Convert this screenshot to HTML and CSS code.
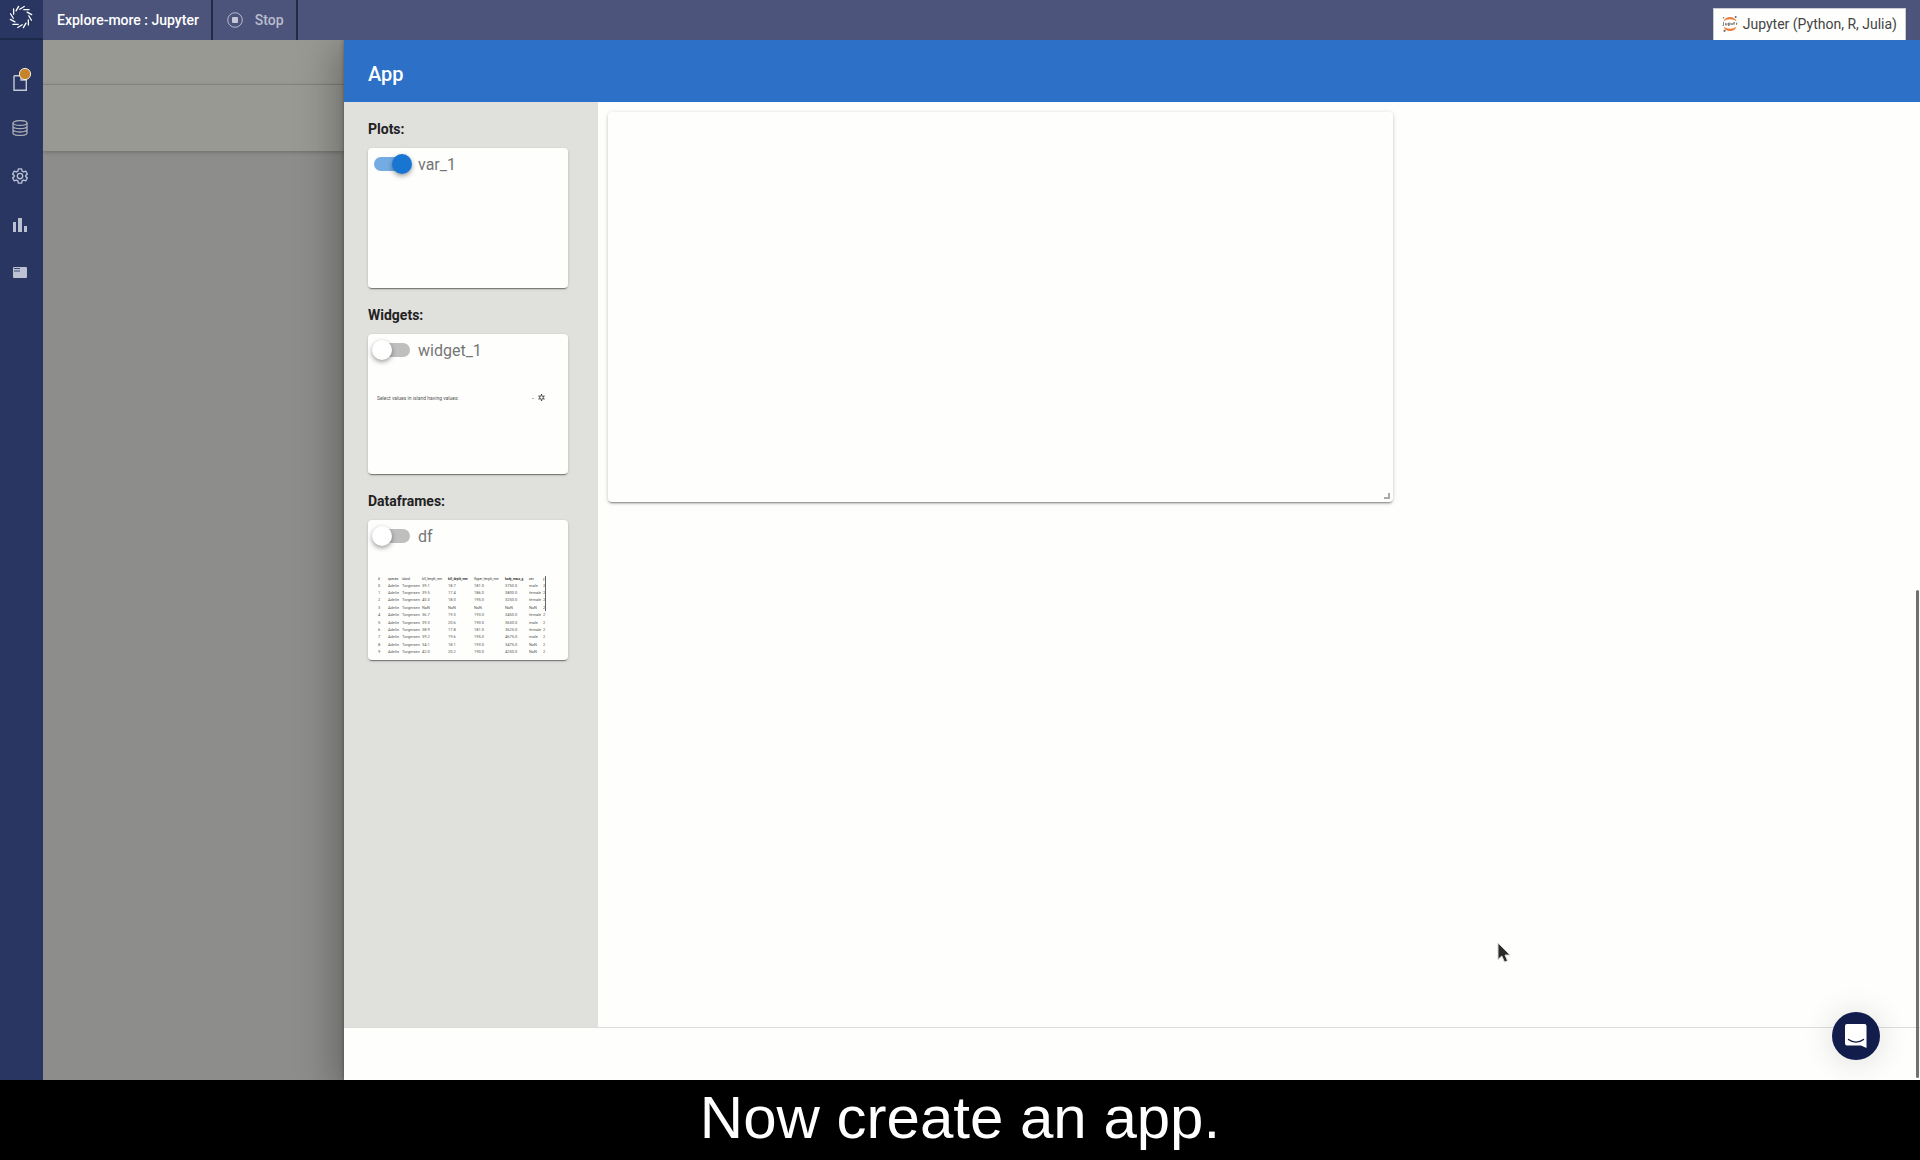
FILE: index.html
```html
<!DOCTYPE html>
<html lang="en">
<head>
<meta charset="utf-8">
<title>Explore-more : Jupyter</title>
<link rel="stylesheet" href="styles.css">
</head>
<body>
<div class="app">
  <nav class="rail" aria-label="Main">
    <a class="rail-logo" href="#" aria-label="Home">
      <svg width="24" height="24" viewBox="-12 -12 24 24" fill="none" stroke="#fff" stroke-width="1.3" stroke-linecap="round">
        <defs><path id="ray" d="M-2.300 -7.500L1.800 -10.800"/></defs>
        <g transform="rotate(8)"><use href="#ray"/><use href="#ray" transform="rotate(30)"/><use href="#ray" transform="rotate(60)"/><use href="#ray" transform="rotate(90)"/><use href="#ray" transform="rotate(120)"/><use href="#ray" transform="rotate(150)"/><use href="#ray" transform="rotate(180)"/><use href="#ray" transform="rotate(210)"/><use href="#ray" transform="rotate(240)"/><use href="#ray" transform="rotate(270)"/><use href="#ray" transform="rotate(300)"/><use href="#ray" transform="rotate(330)"/></g>
      </svg>
    </a>
    <div class="rail-items">
      <a href="#" aria-label="Files"><svg width="24" height="26" viewBox="0 0 24 26"><path d="M6 8.7H13M18.3 12V23.3H6V8.7M13 9V13H18" fill="none" stroke="#c3c8d4" stroke-width="1.4"/><circle cx="17" cy="7" r="5.6" fill="#c5832b" stroke="#f4ead8" stroke-width="1"/></svg></a>
      <a href="#" aria-label="Data"><svg width="16" height="16" viewBox="0 0 16 16" fill="none" stroke="#a9acb4" stroke-width="1.3"><ellipse cx="8" cy="3" rx="7" ry="2.4"/><path d="M1 3V13C1 16.2 15 16.2 15 13V3M1 6.3C1 9.5 15 9.5 15 6.3M1 9.6C1 12.8 15 12.8 15 9.6"/></svg></a>
      <a href="#" aria-label="Settings"><svg width="18" height="18" viewBox="0 0 24 24" fill="none" stroke="#b9c0d2" stroke-width="1.8" stroke-linejoin="round"><circle cx="12" cy="12" r="3.6"/><path d="M9.8 2.5h4.4l.6 2.9 2 1.2 2.8-1 2.2 3.9-2.2 1.9v1.2l2.2 1.9-2.2 3.9-2.8-1-2 1.2-.6 2.9H9.8l-.6-2.9-2-1.2-2.8 1-2.2-3.9 2.2-1.9v-1.2L2.200 9.500l2.200-3.900 2.800 1 2-1.200z"/></svg></a>
      <a href="#" aria-label="Charts"><svg width="16" height="16" viewBox="0 0 16 16" fill="#b9c0d2"><path d="M1 6h3v10H1zM6 2h4v14H6zM12 10h3v6h-3z"/></svg></a>
      <a href="#" aria-label="Dashboards"><svg width="16" height="12" viewBox="0 0 16 12"><rect x="1" y="1" width="14" height="11" rx="1" fill="#bcc2d4"/><path d="M2 2.500H8M2 5H8" stroke="#3c4870" stroke-width="1.200"/></svg></a>
    </div>
  </nav>
  <div class="stage">
    <header class="topbar">
      <h1 class="project">Explore-more : Jupyter</h1>
      <button class="stop" type="button"><svg width="16" height="16" viewBox="0 0 16 16"><circle cx="8" cy="8" r="7.300" fill="none" stroke="#b7bacb"/><rect x="5" y="5" width="6" height="6" rx="1" fill="#c6c8d6"/></svg>Stop</button>
      <a class="kernel" href="#"><svg width="16" height="16" viewBox="0 0 16 16"><path d="M1.500 5.500C3 -.500 13 -.500 14.500 5.500C11 2.500 5 2.500 1.500 5.500ZM1.500 10.500C3 16.500 13 16.500 14.500 10.500C11 13.500 5 13.500 1.500 10.500Z" fill="#ea7c38"/><circle cx="13.700" cy="1" r="1" fill="#666"/><circle cx="1.500" cy="1.800" r=".8" fill="#777"/><circle cx="2.500" cy="14.800" r="1.100" fill="#666"/><path d="M1.500 6V9.500H.500M3.500 7V9H5V7M6.500 10V7H8V9H6.500M9 7L10 9L11 7M12 6V9M11.500 7H13M14.500 9V7H15.500" fill="none" stroke="#555" stroke-width=".7"/></svg>Jupyter (Python, R, Julia)</a>
    </header>
    <div class="workspace">
      <div class="backdrop"><div class="backdrop-bar"></div><div class="backdrop-tools"></div></div>
      <section class="drawer" aria-label="App">
        <header class="drawer-head"><h2>App</h2></header>
        <div class="drawer-body">
          <aside class="sources">
            <h3>Plots:</h3>
            <div class="card">
              <label class="switch"><input type="checkbox" checked><span>var_1</span></label>
            </div>
            <h3>Widgets:</h3>
            <div class="card">
              <label class="switch"><input type="checkbox"><span>widget_1</span></label>
              <div class="preview widget-preview"><span>Select values in island having values:</span><span class="dash">-</span><svg width="7" height="7" viewBox="0 0 14 14"><circle cx="7" cy="7" r="3.600" fill="none" stroke="#444" stroke-width="2"/><path d="M7 0V3M7 11V14M1 3.500L3.500 5M10.500 9L13 10.500M1 10.500L3.500 9M10.500 5L13 3.500" stroke="#444" stroke-width="2.400"/></svg></div>
            </div>
            <h3>Dataframes:</h3>
            <div class="card">
              <label class="switch"><input type="checkbox"><span>df</span></label>
              <div class="preview table-preview">
                <table>
                  <colgroup><col class="c-index"><col class="c-species"><col class="c-island"><col class="c-num"><col class="c-num"><col class="c-flipper"><col class="c-mass"><col class="c-sex"><col class="c-year"></colgroup>
                  <thead><tr><th>#</th><th>species</th><th>island</th><th>bill_length_mm</th><th class="strong">bill_depth_mm</th><th>flipper_length_mm</th><th class="strong">body_mass_g</th><th>sex</th><th>y</th></tr></thead>
                  <tbody>
                    <tr><td>0</td><td>Adelie</td><td>Torgersen</td><td>39.1</td><td>18.7</td><td>181.0</td><td>3750.0</td><td>male</td><td>2</td></tr>
                    <tr><td>1</td><td>Adelie</td><td>Torgersen</td><td>39.5</td><td>17.4</td><td>186.0</td><td>3800.0</td><td>female</td><td>2</td></tr>
                    <tr><td>2</td><td>Adelie</td><td>Torgersen</td><td>40.3</td><td>18.0</td><td>195.0</td><td>3250.0</td><td>female</td><td>2</td></tr>
                    <tr><td>3</td><td>Adelie</td><td>Torgersen</td><td>NaN</td><td>NaN</td><td>NaN</td><td>NaN</td><td>NaN</td><td>2</td></tr>
                    <tr><td>4</td><td>Adelie</td><td>Torgersen</td><td>36.7</td><td>19.3</td><td>193.0</td><td>3450.0</td><td>female</td><td>2</td></tr>
                    <tr><td>5</td><td>Adelie</td><td>Torgersen</td><td>39.3</td><td>20.6</td><td>190.0</td><td>3650.0</td><td>male</td><td>2</td></tr>
                    <tr><td>6</td><td>Adelie</td><td>Torgersen</td><td>38.9</td><td>17.8</td><td>181.0</td><td>3625.0</td><td>female</td><td>2</td></tr>
                    <tr><td>7</td><td>Adelie</td><td>Torgersen</td><td>39.2</td><td>19.6</td><td>195.0</td><td>4675.0</td><td>male</td><td>2</td></tr>
                    <tr><td>8</td><td>Adelie</td><td>Torgersen</td><td>34.1</td><td>18.1</td><td>193.0</td><td>3475.0</td><td>NaN</td><td>2</td></tr>
                    <tr><td>9</td><td>Adelie</td><td>Torgersen</td><td>42.0</td><td>20.2</td><td>190.0</td><td>4250.0</td><td>NaN</td><td>2</td></tr>
                  </tbody>
                </table>
                <i class="mini-scroll"></i>
              </div>
            </div>
          </aside>
          <main class="canvas">
            <div class="tile"><i class="grip"></i></div>
          </main>
        </div>
        <footer class="drawer-foot"></footer>
      </section>
    </div>
  </div>
  <div class="scroll-thumb"></div>
  <button class="chat" type="button" aria-label="Open chat"><svg width="24" height="26" viewBox="0 0 24 26"><path d="M4 1H20.500A2 2 0 0 1 22.500 3V25L17 22.500H3A2 2 0 0 1 1 20.500V3A2 2 0 0 1 3 1Z" fill="#fff"/><path d="M4.500 16.500C9 20 15 20 19.500 16.500" fill="none" stroke="#131d4b" stroke-width="1.400" stroke-linecap="round"/></svg></button>
  <svg class="pointer" width="14" height="22" viewBox="0 0 14 22"><path d="M1 1V17.500L4.800 14L7.500 20L10.500 18.700L8 13H13Z" fill="#2a2a2a" stroke="#d5d5d5" stroke-width="1"/></svg>
</div>
<p class="caption">Now create an app.</p>
</body>
</html>
```

FILE: styles.css
```css
* { box-sizing: border-box; }

body {
  margin: 0;
  min-height: 100vh;
  display: flex;
  flex-direction: column;
  background: #000;
  font-family: Roboto, "Liberation Sans", sans-serif;
  font-size: 14px;
  line-height: 20px;
}

h1, h2, h3, p { margin: 0; }
a { text-decoration: none; }
svg { display: block; flex: none; }

.app {
  position: relative;
  flex: 1;
  display: flex;
  overflow: hidden;
}

/* Left rail */
.rail {
  flex: 0 0 43px;
  background: #283661;
}
.rail-logo {
  display: flex;
  height: 40px;
  padding: 5px 0 0 9px;
  border-bottom: 2px solid #1d2a4c;
}
.rail-items {
  display: flex;
  flex-direction: column;
  padding: 16px 3px 0 0;
}
.rail-items a {
  height: 48px;
  display: flex;
  align-items: center;
  justify-content: center;
}

.stage {
  flex: 1;
  min-width: 0;
  display: flex;
  flex-direction: column;
}

/* Top bar */
.topbar {
  height: 40px;
  display: flex;
  background: #4c547c;
}
.project {
  padding: 10px 12px 10px 14px;
  border-right: 2px solid #212a46;
  color: #fff;
  font-size: 14px;
  font-weight: 500;
}
.stop {
  display: flex;
  align-items: center;
  gap: 12px;
  padding: 0 12px 0 14px;
  border: 0;
  border-right: 2px solid #212a46;
  background: none;
  color: #b9bccc;
  font: 500 14px/20px Roboto, sans-serif;
}
.kernel {
  display: flex;
  align-items: center;
  gap: 5px;
  margin: 8px 14px 0 auto;
  padding: 0 8px 2px;
  border: 1px solid #c9cad2;
  border-bottom: 0;
  background: #fefffd;
  color: #444;
}

/* Dimmed page behind the drawer */
.workspace {
  flex: 1;
  display: flex;
  overflow: hidden;
}
.backdrop {
  flex: 0 0 301px;
  background: #8d8d8b;
}
.backdrop-bar {
  height: 45px;
  background: #999994;
  border-bottom: 1px solid #8a8a86;
}
.backdrop-tools {
  height: 66px;
  background: #999994;
  box-shadow: 0 1px 4px rgba(0, 0, 0, .25);
}

/* Drawer */
.drawer {
  position: relative;
  flex: 1;
  min-width: 0;
  display: flex;
  flex-direction: column;
  background: #fefffd;
  box-shadow: 0 0 4px rgba(0, 0, 0, .35), -6px 8px 36px 4px rgba(0, 0, 0, .28);
}
.drawer-head {
  padding: 22px 24px 16px;
  background: #2c71c7;
  color: #fff;
}
.drawer-head h2 {
  font-size: 20px;
  line-height: 24px;
  font-weight: 500;
}
.drawer-body {
  flex: 1;
  display: flex;
}
.drawer-foot {
  height: 53px;
  border-top: 1px solid #dcdddb;
}

/* Source list */
.sources {
  flex: 0 0 254px;
  padding: 14px 30px 0 24px;
  background: #e0e0dd;
}
.sources h3 {
  padding: 3px 0 9px;
  color: #222;
  font-size: 14px;
  font-weight: 700;
}
.card {
  height: 140px;
  margin-bottom: 14px;
  padding: 4px;
  border-radius: 4px;
  background: #fefffd;
  box-shadow: 0 1px 3px rgba(0, 0, 0, .2), 0 2px 1px -1px rgba(0, 0, 0, .4);
}
.switch {
  display: flex;
  align-items: center;
  gap: 6px;
  height: 24px;
  color: #757575;
  font-size: 16px;
}
.switch span { padding-top: 1px; }
.switch input {
  appearance: none;
  display: grid;
  align-items: center;
  width: 40px;
  height: 20px;
  margin: 0;
}
.switch input::before,
.switch input::after {
  content: "";
  grid-area: 1 / 1;
}
.switch input::before {
  height: 14px;
  margin: 0 2px;
  border-radius: 7px;
  background: #bfbfbf;
}
.switch input::after {
  width: 20px;
  height: 20px;
  border-radius: 50%;
  background: #fff;
  box-shadow: 0 2px 5px rgba(0, 0, 0, .4);
}
.switch input:checked::before { background: #75abe3; }
.switch input:checked::after {
  justify-self: end;
  background: #1876d2;
}

/* Card previews */
.preview {
  color: #555;
  font-size: 4px;
  line-height: 6px;
}
.widget-preview {
  display: flex;
  align-items: center;
  margin: 32px 19px 0 5px;
  font-size: 5px;
}
.widget-preview .dash {
  margin: 0 4px 0 auto;
  font-weight: 700;
}
.table-preview {
  position: relative;
  width: 169px;
  margin: 28px 0 0 6px;
}
.table-preview table {
  width: 100%;
  height: 80px;
  table-layout: fixed;
  border-collapse: collapse;
}
.table-preview th,
.table-preview td {
  padding: 0;
  font-weight: 400;
  text-align: left;
  white-space: nowrap;
}
.table-preview th {
  color: #333;
  font-size: 3px;
}
.table-preview th.strong { font-weight: 700; }
.c-index { width: 10px; }
.c-species { width: 14px; }
.c-island { width: 20px; }
.c-num { width: 26px; }
.c-flipper { width: 31px; }
.c-mass { width: 24px; }
.c-sex { width: 14px; }
.c-year { width: 4px; }
.mini-scroll {
  position: absolute;
  top: 0;
  right: 1px;
  width: 1px;
  height: 35px;
  background: #666;
}

/* Canvas */
.canvas {
  flex: 1;
  min-width: 0;
  padding: 10px;
}
.tile {
  display: flex;
  align-items: flex-end;
  justify-content: flex-end;
  width: 100%;
  max-width: 785px;
  height: 390px;
  padding: 3px;
  border-radius: 4px;
  box-shadow: 0 1px 4px rgba(0, 0, 0, .2), 0 2px 2px -1px rgba(0, 0, 0, .4);
}
.grip {
  width: 6px;
  height: 6px;
  border: solid #aaa;
  border-width: 0 2px 2px 0;
}

/* Overlays */
.scroll-thumb {
  position: absolute;
  right: 1px;
  bottom: 2px;
  width: 3px;
  height: 488px;
  border-radius: 2px;
  background: #707070;
}
.chat {
  position: absolute;
  right: 40px;
  bottom: 20px;
  width: 48px;
  height: 48px;
  display: flex;
  align-items: center;
  justify-content: center;
  padding: 0;
  border: 0;
  border-radius: 50%;
  background: #131d4b;
  box-shadow: 0 2px 32px rgba(0, 0, 0, .14);
}
.pointer {
  position: absolute;
  left: 1497px;
  top: 942px;
}

.caption {
  padding: 4px 0 8px;
  color: #fff;
  font-family: "Liberation Sans", sans-serif;
  font-size: 60px;
  line-height: 68px;
  text-align: center;
}
```
